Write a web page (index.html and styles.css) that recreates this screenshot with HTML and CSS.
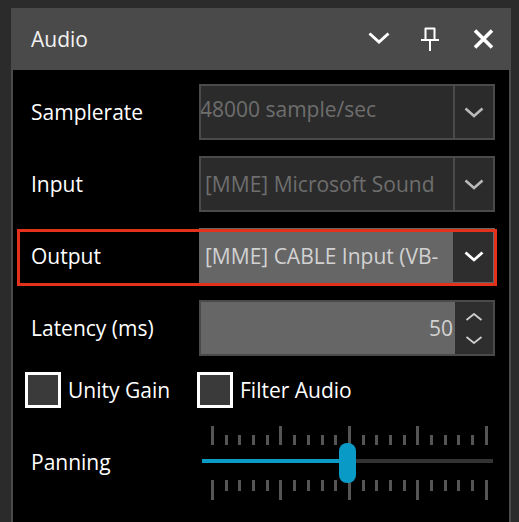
FILE: index.html
```html
<!DOCTYPE html>
<html>
<head>
<meta charset="utf-8">
<link rel="stylesheet" href="styles.css">
</head>
<body>
<div class="panel">
  <div class="header">
    <span class="title">Audio</span>
    <div class="hicons">
      <svg class="hi-chev" width="22" height="12" viewBox="0 0 22 12"><polyline points="1.5,1.5 11,10 20.5,1.5" fill="none" stroke="#fff" stroke-width="3"/></svg>
      <svg class="hi-pin" width="18" height="24" viewBox="0 0 18 24"><path d="M4.5 1v12M13.5 1v12M4 1.5h10M0 13h18M9 13v11" fill="none" stroke="#fff" stroke-width="2"/></svg>
      <svg class="hi-close" width="21" height="20" viewBox="0 0 21 20"><path d="M2 1.5l17 17M19 1.5l-17 17" fill="none" stroke="#fff" stroke-width="3.6"/></svg>
    </div>
  </div>
  <div class="content">
    <div class="row">
      <span class="label">Samplerate</span>
      <div class="combo disabled">
        <span class="ctext shifted">48000 sample/sec</span>
        <span class="cbtn"><svg width="20" height="11" viewBox="0 0 20 11"><polyline points="1.5,1.5 10,9 18.5,1.5" fill="none" stroke="#b9b9b9" stroke-width="2.6"/></svg></span>
      </div>
    </div>
    <div class="row">
      <span class="label">Input</span>
      <div class="combo disabled">
        <span class="ctext">[MME] Microsoft Sound</span>
        <span class="cbtn"><svg width="20" height="11" viewBox="0 0 20 11"><polyline points="1.5,1.5 10,9 18.5,1.5" fill="none" stroke="#b9b9b9" stroke-width="2.6"/></svg></span>
      </div>
    </div>
    <div class="row highlighted">
      <span class="label">Output</span>
      <div class="combo active">
        <span class="ctext">[MME] CABLE Input (VB-</span>
        <span class="cbtn"><svg width="20" height="11" viewBox="0 0 20 11"><polyline points="1.5,1.5 10,9 18.5,1.5" fill="none" stroke="#fff" stroke-width="2.8"/></svg></span>
      </div>
      <div class="redbox"></div>
    </div>
    <div class="row">
      <span class="label">Latency (ms)</span>
      <div class="combo active spin">
        <span class="ctext num">50</span>
        <span class="sbtn">
          <svg width="18" height="8" viewBox="0 0 18 8"><polyline points="1.5,7 9,1 16.5,7" fill="none" stroke="#cfcfcf" stroke-width="1.8"/></svg>
          <svg width="18" height="8" viewBox="0 0 18 8"><polyline points="1.5,1 9,7 16.5,1" fill="none" stroke="#cfcfcf" stroke-width="1.8"/></svg>
        </span>
      </div>
    </div>
    <div class="checks">
      <label class="check first"><span class="box"></span><span>Unity Gain</span></label>
      <label class="check"><span class="box"></span><span>Filter Audio</span></label>
    </div>
    <div class="row sliderrow">
      <span class="label">Panning</span>
      <div class="slider">
        <div class="ticks top">
          <i class="maj"></i><i></i><i></i><i></i><i></i><i class="maj"></i><i></i><i></i><i></i><i></i><i class="maj"></i><i></i><i></i><i></i><i></i><i class="maj"></i><i></i><i></i><i></i><i></i><i class="maj"></i>
        </div>
        <div class="trackzone">
          <div class="track"><div class="fill"></div></div>
          <div class="thumb"></div>
        </div>
        <div class="ticks bottom">
          <i class="maj"></i><i></i><i></i><i></i><i></i><i class="maj"></i><i></i><i></i><i></i><i></i><i class="maj"></i><i></i><i></i><i></i><i></i><i class="maj"></i><i></i><i></i><i></i><i></i><i class="maj"></i>
        </div>
      </div>
    </div>
  </div>
</div>
</body>
</html>
```
FILE: styles.css
```css
* { box-sizing: border-box; }
html, body { margin: 0; padding: 0; }
body {
  background: #2b2b2b;
  font-family: "Open Sans", "Noto Sans", sans-serif;
  font-size: 21px;
  color: #fff;
  width: 519px;
  height: 522px;
  overflow: hidden;
}
.panel {
  margin: 8px 0 0 11px;
  width: 500px;
  height: 514px;
  background: #4a4a4a;
  display: flex;
  flex-direction: column;
}
.header {
  height: 62px;
  flex: none;
  display: flex;
  align-items: center;
  padding: 0 17px 0 20px;
}
.title { color: #f2f2f2; line-height: 1; margin-top: 1px; }
.hicons {
  margin-left: auto;
  display: flex;
  align-items: center;
}
.hi-chev { margin-top: -2px; }
.hi-pin { margin-left: 31px; }
.hi-close { margin-left: 34px; }
.content {
  flex: 1;
  margin: 0 2px;
  background: #000;
  padding: 14px 14px 0 0;
  display: flex;
  flex-direction: column;
  gap: 16px;
}
.row {
  position: relative;
  display: flex;
  align-items: center;
  height: 56px;
  padding-left: 18px;
}
.label {
  width: 168px;
  flex: none;
  color: #fff;
  line-height: 1;
}
.combo {
  width: 296px;
  height: 56px;
  flex: none;
  border: 2px solid #4a4a4a;
  display: flex;
  align-items: stretch;
  background: #2b2b2b;
}
.ctext {
  flex: 1;
  display: flex;
  align-items: center;
  padding-left: 4px;
  white-space: nowrap;
  overflow: hidden;
  color: #6e6e6e;
}
.ctext.shifted { padding-left: 0; text-indent: -1px; padding-bottom: 6px; }
.cbtn {
  width: 40px;
  flex: none;
  border-left: 2px solid #4a4a4a;
  display: flex;
  align-items: center;
  justify-content: center;
  background: #2b2b2b;
}
.combo.active { background: #666; border-color: #4a4a4a; }
.combo.active .ctext { color: #d2d2d2; }
.combo.active .cbtn { border-left-color: #2e2e2e; background: #2e2e2e; }
.highlighted .combo { border-color: #666; }
.ctext.num { justify-content: flex-end; padding-right: 2px; }
.sbtn {
  width: 38px;
  flex: none;
  background: #2e2e2e;
  display: flex;
  flex-direction: column;
  align-items: center;
  justify-content: center;
  gap: 15px;
}
.redbox {
  position: absolute;
  left: 4px;
  right: -2px;
  top: 1px;
  bottom: -2px;
  border: 3px solid #e3321c;
  pointer-events: none;
}
.checks {
  display: flex;
  align-items: center;
  height: 36px;
  padding-left: 12px;
}
.check {
  display: flex;
  align-items: center;
  gap: 7px;
  color: #fff;
  line-height: 1;
}
.check.first { width: 172px; }
.box {
  width: 36px;
  height: 36px;
  border: 3px solid #fff;
  background: #3a3a3a;
  flex: none;
}
.sliderrow {
  height: 74px;
  margin-top: 2px;
}
.sliderrow .label { margin-top: -2px; }
.slider {
  width: 296px;
  height: 74px;
  display: flex;
  flex-direction: column;
}
.ticks {
  display: flex;
  justify-content: space-between;
  margin-left: 12px;
  width: 277px;
}
.ticks i {
  display: block;
  width: 3px;
  background: #555;
}
.ticks.top { height: 19px; align-items: flex-end; }
.ticks.top i { height: 10px; }
.ticks.top i.maj { height: 19px; }
.ticks.bottom { height: 20px; align-items: flex-start; }
.ticks.bottom i { height: 11px; }
.ticks.bottom i.maj { height: 20px; }
.trackzone {
  position: relative;
  height: 35px;
}
.track {
  position: absolute;
  left: 3px;
  width: 291px;
  top: 14px;
  height: 4px;
  background: #333;
}
.fill {
  width: 138px;
  height: 4px;
  background: #0a9ac6;
}
.thumb {
  position: absolute;
  left: 140px;
  top: -2px;
  width: 17px;
  height: 40px;
  border-radius: 8px;
  background: #0a9ac6;
}
```
